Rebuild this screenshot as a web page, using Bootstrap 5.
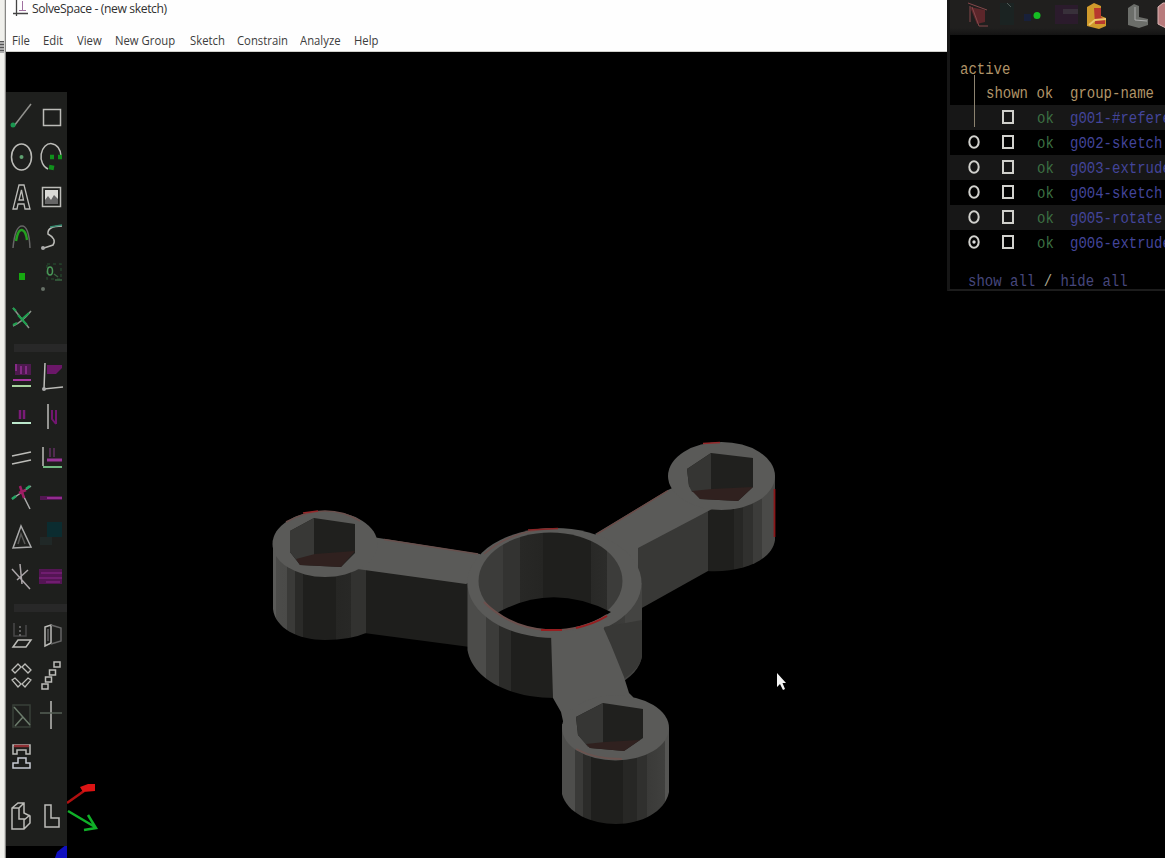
<!DOCTYPE html>
<html lang="en">
<head>
<meta charset="utf-8">
<title>SolveSpace - (new sketch)</title>
<link href="https://cdn.jsdelivr.net/npm/bootstrap@5.3.0/dist/css/bootstrap.min.css" rel="stylesheet">
<style>
body{background:#000;font-family:"Open Sans","Noto Sans",sans-serif}
.edge-strip{width:6px;background:linear-gradient(90deg,#f0f0ec 0 4px,#b8b8b4 5px,#555 6px)}
.edge-grip{width:4px;height:12px;margin-top:41px;background:repeating-linear-gradient(#555 0 1px,#aaa 1px 3px)}
.app-head{height:52px;background:#fefefe;border-bottom:1px solid #d0d0cc;color:#303030}
.title-row{height:17px;font-size:13.5px;line-height:17px;letter-spacing:-.42px;padding-left:7px}
.title-text{display:inline-block;transform:scaleX(.9);transform-origin:0 50%}
.menu-row{height:34px;font-size:13px;margin-left:6px;line-height:24px;padding-top:11px;grid-template-columns:31px 34px 38px 75px 47px 63px 54px 40px}
.menu-row a{color:#3c3c3c;text-decoration:none;white-space:nowrap;transform:scaleX(.87);transform-origin:0 50%}
.canvas-area{min-height:0}
.tool-panel{top:40px;left:0;width:61px;height:754px;padding-top:5px;background:#1e1f1d}
.tool-grid{display:grid;grid-template-columns:30px 30px}
.tool-grid svg{width:30px;height:40px;display:block;fill:none;stroke:#bcbcb8;stroke-width:1.5}
.tool-gap{height:19.5px;padding:7px 0 5px 8px}
.tool-gap div{height:8px;background:#282828}
.prop-win{left:947px;top:0;width:218px;height:291px;background:#000;border-left:3px solid #161616;border-bottom:2px solid #1c1c1c;font-family:"Liberation Mono",monospace;font-size:14px;z-index:5}
.prop-tools{height:35px;background:linear-gradient(#201f1e 28px,#141414)}
.mono{display:inline-block;transform:translateY(1px) scaleY(1.16);white-space:pre}
.amber{color:#b09468}
.prop-row{height:25px;line-height:25px;display:grid;grid-template-columns:48px 34px 38px 1fr;white-space:nowrap;overflow:hidden}
.prop-row.alt{background:#171717}
.prop-row svg{align-self:center;justify-self:center;fill:none;stroke:#d0d0cc;stroke-width:2;margin-bottom:2px}
.okc{color:#3c7042;padding-left:5px}
.gname{color:#43459a}
</style>
</head>
<body class="vh-100 overflow-hidden m-0">
<div class="d-flex h-100 position-relative">
  <div class="edge-strip flex-shrink-0"><div class="edge-grip"></div></div>
  <div class="flex-grow-1 d-flex flex-column">
    <header class="app-head flex-shrink-0">
      <div class="title-row d-flex align-items-center">
        <svg width="15" height="17" viewBox="0 0 15 17" fill="none" stroke="#444"><path d="M3.500 0V16M0 13.500H15" stroke-width="1.300"/><path d="M9.500 1V11M6 10.500H13" stroke="#a070a0"/></svg>
        <span class="ms-1 title-text">SolveSpace - (new sketch)</span>
      </div>
      <nav class="menu-row d-grid">
        <a href="#">File</a><a href="#">Edit</a><a href="#">View</a><a href="#">New Group</a><a href="#">Sketch</a><a href="#">Constrain</a><a href="#">Analyze</a><a href="#">Help</a>
      </nav>
    </header>
    <main class="canvas-area flex-grow-1 position-relative">
      <svg class="d-block" width="1159" height="806" viewBox="6 52 1159 806">
        <defs>
          <linearGradient id="gl" gradientUnits="userSpaceOnUse" x1="272" x2="378" y1="0" y2="0"><stop offset=".04" stop-color="#5a5a58"/><stop offset=".04" stop-color="#4c4c4a"/><stop offset=".14" stop-color="#4a4a48"/><stop offset=".14" stop-color="#3a3a38"/><stop offset=".22" stop-color="#3a3a38"/><stop offset=".22" stop-color="#2a2a28"/><stop offset=".29" stop-color="#2a2a28"/><stop offset=".29" stop-color="#1f1f1d"/><stop offset=".6" stop-color="#1f1f1d"/><stop offset=".6" stop-color="#262624"/><stop offset=".75" stop-color="#282826"/><stop offset=".75" stop-color="#323230"/></linearGradient>
          <linearGradient id="gb" gradientUnits="userSpaceOnUse" x1="562" x2="669" y1="0" y2="0"><stop offset=".12" stop-color="#4e4e4c"/><stop offset=".12" stop-color="#3a3a38"/><stop offset=".2" stop-color="#3a3a38"/><stop offset=".2" stop-color="#2b2b29"/><stop offset=".27" stop-color="#2b2b29"/><stop offset=".27" stop-color="#1f1f1d"/><stop offset=".57" stop-color="#1f1f1d"/><stop offset=".57" stop-color="#272725"/><stop offset=".7" stop-color="#272725"/><stop offset=".7" stop-color="#30302e"/><stop offset=".79" stop-color="#30302e"/><stop offset=".79" stop-color="#3a3a38"/><stop offset=".96" stop-color="#40403e"/><stop offset=".96" stop-color="#555553"/></linearGradient>
          <linearGradient id="gr" gradientUnits="userSpaceOnUse" x1="668" x2="775" y1="0" y2="0"><stop offset=".37" stop-color="#30302e"/><stop offset=".37" stop-color="#1f1f1d"/><stop offset=".62" stop-color="#1f1f1d"/><stop offset=".62" stop-color="#272725"/><stop offset=".7" stop-color="#272725"/><stop offset=".7" stop-color="#30302e"/><stop offset=".79" stop-color="#30302e"/><stop offset=".79" stop-color="#3c3c3a"/><stop offset=".88" stop-color="#3c3c3a"/><stop offset=".88" stop-color="#4a4a48"/></linearGradient>
          <linearGradient id="gc" gradientUnits="userSpaceOnUse" x1="467" x2="642" y1="0" y2="0"><stop offset=".11" stop-color="#4c4c4a"/><stop offset=".11" stop-color="#3c3c3a"/><stop offset=".18" stop-color="#3c3c3a"/><stop offset=".18" stop-color="#2b2b29"/><stop offset=".25" stop-color="#2b2b29"/><stop offset=".25" stop-color="#1f1f1d"/><stop offset=".7" stop-color="#1f1f1d"/><stop offset=".7" stop-color="#343432"/><stop offset=".9" stop-color="#3c3c3a"/><stop offset=".9" stop-color="#444442"/></linearGradient>
          <linearGradient id="gi" gradientUnits="userSpaceOnUse" x1="478" x2="623" y1="0" y2="0"><stop offset=".17" stop-color="#3c3c3a"/><stop offset=".17" stop-color="#333331"/><stop offset=".29" stop-color="#333331"/><stop offset=".29" stop-color="#282826"/><stop offset=".45" stop-color="#252523"/><stop offset=".45" stop-color="#1f1f1d"/><stop offset=".78" stop-color="#1f1f1d"/><stop offset=".78" stop-color="#292927"/><stop offset=".89" stop-color="#2c2c2a"/><stop offset=".89" stop-color="#3c3c3a"/></linearGradient>
        </defs>
        <!-- left arm and boss -->
        <path d="M364 566L470 583V647L364 633Z" fill="#1e1e1c"/>
        <path d="M273 544V609C275 628 298 640 325 640Q350 640 366 633V567H377V544Z" fill="url(#gl)"/>
        <path d="M360 535L385 539 480 554 492 570 466 584 350 568Z" fill="#5a5a58"/>
        <ellipse cx="325" cy="544" rx="52.500" ry="33" fill="#5a5a58"/>
        <path d="M290 531L314 518 355 524V553L341 567 300 565 290 552Z" fill="#20201e"/>
        <path d="M290 531L314 518V560L298 562 290 552Z" fill="#383836"/>
        <path d="M296 559L315 554 355 551 341 567 300 565Z" fill="#30211f"/>
        <path d="M286 522Q306 511 325 511T360 521" fill="none" stroke="#6a504d" stroke-width="1.500"/><path d="M303 513L318 511" stroke="#96282a" stroke-width="1.500"/>
        <path d="M384 539.500L478 554" stroke="#68504d" stroke-width="1.500"/>
        <!-- right arm and boss -->
        <path d="M775 476V540C772 560 744 573 707 571V500Z" fill="url(#gr)"/>
        <path d="M630 548L708 506V571L640 609Z" fill="#383836"/>
        <path d="M595 534L668 490 690 480 714 508 638 548V570Z" fill="#5a5a58"/>
        <ellipse cx="721.500" cy="476" rx="53.500" ry="34" fill="#5a5a58"/>
        <path d="M687 469L711 453 753 458V487L738 501 700 499 689 486Z" fill="#20201e"/>
        <path d="M687 469L711 453V491L692 492 689 486Z" fill="#353533"/>
        <path d="M692 491L712 489 753 487 738 501 700 499Z" fill="#30211f"/>
        <path d="M774.500 489V537" stroke="#8a1719" stroke-width="1.800"/>
        <path d="M703 443.500L720 442.500" stroke="#96282a" stroke-width="1.500"/>
        <path d="M597 534L668 490.500" stroke="#6c4a46" stroke-width="1.300"/>
        <!-- hub -->
        <path d="M467.500 583V650C472 678 508 698 555 698C602 698 640 680 642 655V583Z" fill="url(#gc)"/>
        <ellipse cx="554.500" cy="583" rx="87" ry="55" fill="#5a5a58"/>
        <ellipse cx="550.500" cy="581" rx="72" ry="48.500" fill="url(#gi)"/>
        <path d="M497 613Q552 582 611 612Q584 630 552 630Q517 628 497 613Z" fill="#000"/>
        <path d="M484 602Q510 628 550 630.500Q584 630 607 615" fill="none" stroke="#6c504d" stroke-width="2"/>
        <path d="M541 630H562M576 628Q594 624 607 616" fill="none" stroke="#961e20" stroke-width="2"/>
        <path d="M484 554Q512 530 550 529" fill="none" stroke="#6a504d" stroke-width="1.500"/><path d="M528 530L558 528.500" stroke="#8a2526" stroke-width="1.500"/>
        <!-- lower arm and boss -->
        <path d="M604 627L642 620V657Q640 668 624 679Z" fill="#383836"/>
        <path d="M551 633L603 627 611 645 624 677 629 693 633 697 640 712 565 730 561 712 553 698Z" fill="#5a5a58"/>
        <path d="M562 724V794C567 813 591 824 616 824S665 812 669 792V728Z" fill="url(#gb)"/>
        <ellipse cx="615.500" cy="728" rx="53.500" ry="32.500" fill="#5a5a58"/>
        <path d="M576 717L603 703 643 709V738L624 751 590 748 578 735Z" fill="#20201e"/>
        <path d="M576 717L603 703V745L588 747 578 735Z" fill="#363634"/>
        <path d="M586 744L605 742 640 740 624 751 590 748Z" fill="#30211f"/>
        <path d="M576 749Q594 759 622 759" fill="none" stroke="#6b5450" stroke-width="2"/>
        <!-- axes -->
        <path d="M67 803L84 791" stroke="#b01010" stroke-width="2.500"/><path d="M80 787L88 784H95V791L83 792Z" fill="#dc1414"/>
        <path d="M68 811L95 827M88 815L96 828 84 830" fill="none" stroke="#10b028" stroke-width="2.500"/>
        <path d="M57 852L67 844V858H55Z" fill="#1010c0"/>
        <path d="M777 673V687L780 684 783 690 785 689 782.500 683H786Z" fill="#f4f4f4"/>
      </svg>

      <div class="tool-panel position-absolute">
        <div class="tool-grid">
          <svg><path d="M8 29L25 7" stroke="#92928e"/><circle cx="7" cy="28" r="2.500" fill="#1a9650" stroke="none"/></svg>
          <svg><path d="M7.500 12.500H24.500V28.500H7.500Z"/></svg>
          <svg><ellipse cx="15.500" cy="20" rx="10" ry="13"/><circle cx="15.500" cy="20" r="2" fill="#5fa070" stroke="none"/></svg>
          <svg><path d="M12 32A10 13 0 1 1 25 19"/><path d="M14 20h4M22 20h4M13 30l5 1" stroke="#10901c" stroke-width="4.500"/></svg>
          <svg><path d="M7 32H11L12 27H18L19 32H24L18 8H13ZM13 23L15.500 13 17.500 23Z" stroke-width="1.300"/></svg>
          <svg><path d="M6.500 10.500H24.500V29.500H6.500Z"/><path d="M9 13H22V27H9Z" fill="#dadad6" stroke="none"/><path d="M9 27V23L12 19 15 23 18 18 22 22V27Z" fill="#666" stroke="none"/></svg>
          <svg><path d="M7 31Q9 9 16 9T24 31" stroke="#666"/><path d="M10 24Q12 12 16 13T21 23" stroke="#24a020" stroke-width="2.500"/></svg>
          <svg><path d="M26 9Q11 9 12 17Q21 22 17 28L8 31"/><path d="M14 10L26 8" stroke="#368a70"/><circle cx="7" cy="31" r="2" fill="#aaa" stroke="none"/></svg>
          <svg><path d="M13 16h6v7h-6z" fill="#16a810" stroke="none"/></svg>
          <svg><path d="M11 7h14v15H11z" stroke="#24432b" stroke-dasharray="3 3"/><ellipse cx="14" cy="14" rx="2.500" ry="4" stroke="#4a9858"/><path d="M19 23h7M18 17l4 3" stroke="#386540"/><circle cx="7" cy="32" r="2" fill="#667066" stroke="none"/></svg>
          <svg><path d="M7 11L23 31M7 29Q16 25 25 14" stroke="#8c958c"/><path d="M7 11l3 3M7 28l4-2M12 18l9 10M15 23l8-7" stroke="#20a050" stroke-width="2"/></svg>
        </div>
        <div class="tool-gap"><div></div></div>
        <div class="tool-grid">
          <svg><path d="M9 7h16v11H9z" fill="#4e1a4f" stroke="none"/><path d="M10 7V14M15 9V17M20 9V17" stroke="#842a85" stroke-width="2"/><path d="M7 23H25" stroke="#a738a2" stroke-width="2"/><path d="M6 29H25" stroke="#a9d4a0" stroke-width="2"/></svg>
          <svg><path d="M9 6L8 32L27 30"/><path d="M11 8h15v3l-6 6h-9z" fill="#6b1768" stroke="none"/><circle cx="8" cy="32" r="2" fill="#aaa" stroke="none"/></svg>
          <svg><path d="M14 13V22M18 13V22" stroke="#7a1b78" stroke-width="2.500"/><path d="M6 26H25" stroke="#bce8cc" stroke-width="2"/></svg>
          <svg><path d="M12 7V32"/><path d="M16 13V22L20 27M20 13V27" stroke="#721670" stroke-width="2"/></svg>
          <svg><path d="M6 19L25 15M6 27L25 23"/></svg>
          <svg><path d="M7 10V29"/><path d="M7 30H26" stroke="#70ba80" stroke-width="2"/><path d="M11 23H26" stroke="#9a359a" stroke-width="3"/><path d="M14 11v9M18 11v9" stroke="#613062"/></svg>
          <svg><path d="M6 22L25 9M16 16L24 32" stroke="#aaa"/><path d="M14 9L18 21M13 16L20 13" stroke="#a01d65" stroke-width="2.500"/><path d="M6 22l4-3M20 12l4-3" stroke="#26a866" stroke-width="2.500"/></svg>
          <svg><path d="M4 21H26" stroke="#521752" stroke-width="4"/><path d="M11 21H26" stroke="#932c90" stroke-width="2"/></svg>
          <svg><path d="M7 31L15 9L25 30Z" stroke="#aaa"/><path d="M12 27L15 17L19 27" stroke="#585856"/></svg>
          <svg><path d="M11 5h15v15H11z" fill="#0b2c30" stroke="none"/><path d="M4 20h12v8H4z" fill="#202827" stroke="none"/></svg>
          <svg><path d="M6 12L24 32M14 7L16 27M22 13L11 23" stroke="#aaa5a8"/></svg>
          <svg><path d="M3 12H26V27H3Z" fill="#541554" stroke="none"/><path d="M5 16H26M3 21H26M10 25H24" stroke="#7a207a"/></svg>
        </div>
        <div class="tool-gap"><div></div></div>
        <div class="tool-grid">
          <svg><path d="M7 31L12 24H25L20 31Z"/><path d="M8 7V20H20V9" stroke="#484848"/><path d="M14 10v12" stroke="#777" stroke-dasharray="2 2"/></svg>
          <svg><path d="M9 11L15 9V27L9 30Z"/><path d="M15 9L25 12V25L15 28M12 13V25" stroke="#666"/></svg>
          <svg><path d="M12 8L15 11L9 17L6 14ZM19 8L16 11L22 17L25 14ZM6 24L9 22L15 28L12 31ZM25 24L22 22L16 28L19 31Z" stroke-width="1.300"/></svg>
          <svg><path d="M6 28h6v5h-6zM9.500 21h6v5h-6zM13.500 14h6v5h-6zM18 6h6v5h-6z"/></svg>
          <svg><path d="M7 9H24V31H7Z" stroke="#384038"/><path d="M8 11L24 29M9 30L17 21" stroke="#6c7c6c"/></svg>
          <svg><path d="M15 5V33"/><path d="M4 17H26" stroke="#566056"/></svg>
          <svg><path d="M7 9H24V18H20V14H11V18H7Z"/><path d="M8 10H23" stroke="#8f3034" stroke-width="2.500"/><path d="M12 22H20V27H24V32H7V27H12Z" stroke="#c8cbd3"/></svg>
        </div>
        <div class="tool-gap"></div>
        <div class="tool-grid">
          <svg><path d="M6 12L12 7H18V17L24 20V27L18 33H6ZM6 12H13V23H18V33M13 12L18 7M18 24L24 19"/></svg>
          <svg><path d="M9 9H15V22H23V31H9Z"/></svg>
        </div>
      </div>
    </main>
  </div>

  <aside class="prop-win position-absolute overflow-hidden">
    <div class="prop-tools">
      <svg class="d-block" width="215" height="35" viewBox="950 0 215 35" fill="none">
        <path d="M970 7L985 10V22L977 24Z" fill="#5c262a"/><path d="M968 3L987 10M972 7L979 26H988M970 6V22" stroke="#85484b"/>
        <path d="M1000 3h14v22h-14z" fill="#1b2322"/><path d="M1007 3l4 4" stroke="#4e5956"/>
        <circle cx="1037" cy="15.500" r="3.500" fill="#15bd23"/><path d="M1024 14h7v7h-7z" fill="#18203a"/>
        <path d="M1055 5h23v19h-23z" fill="#2b1b2c"/><path d="M1063 9h15v5h-15z" fill="#38303a"/>
        <path d="M1087 7L1094 3L1101 6V16L1106 18V26L1099 29L1087 26Z" fill="#d09a2c"/><path d="M1094 8h7v9l4 2v5h-10z" fill="#b7382e"/><path d="M1089 25L1095 20L1106 19" stroke="#edc96b" stroke-width="2"/>
        <path d="M1128 8L1134 4L1139 6V17L1148 19V25L1139 28L1128 25Z" fill="#6c6e6a"/><path d="M1135 7V20L1147 21" stroke="#aaa"/>
        <path d="M1158 7L1163 3H1166V28L1158 24Z" fill="#b87b7c" stroke="#dbb5b4"/>
      </svg>
    </div>
    <div class="amber position-relative" style="height:45px;margin-top:20px;line-height:25px">
      <div class="ps-2 ms-1" style="height:25px;line-height:27px;text-indent:-1px"><span class="mono">active</span></div>
      <div style="display:grid;grid-template-columns:36px 84px 1fr"><span></span><span class="mono">shown ok</span><span class="mono">group-name</span></div>
      <svg class="position-absolute" style="left:23px;top:20px" width="3" height="55"><path d="M1.500 0V52" stroke="#8c8370"/></svg>
    </div>
    <div id="groups" style="padding-top:5px"></div>
    <div style="color:#46477c;margin-top:13px;padding-left:18px;line-height:25px"><span class="mono">show all <span style="color:#aaa58e">/</span> hide all</span></div>
  </aside>
</div>
<script>
var names=["g001-#references","g002-sketch","g003-extrude","g004-sketch","g005-rotate","g006-extrude"];
document.getElementById("groups").innerHTML=names.map(function(n,i){
  var radio=i?'<ellipse cx="8" cy="8" rx="4.700" ry="5.700"/>'+(i===5?'<circle cx="8" cy="8" r="1.700" fill="#ddd" stroke="none"/>':''):'';
  return '<div class="prop-row'+(i%2?'':' alt')+'"><svg width="16" height="16">'+radio+'</svg>'+
  '<svg width="14" height="16" style="transform:translateX(-7px)"><path d="M2 2H12V14H2Z"/></svg>'+
  '<span class="okc"><span class="mono">ok</span></span><span class="gname"><span class="mono">'+n+'</span></span></div>';
}).join("");
</script>
<script src="https://cdn.jsdelivr.net/npm/bootstrap@5.3.0/dist/js/bootstrap.bundle.min.js"></script>
</body>
</html>
